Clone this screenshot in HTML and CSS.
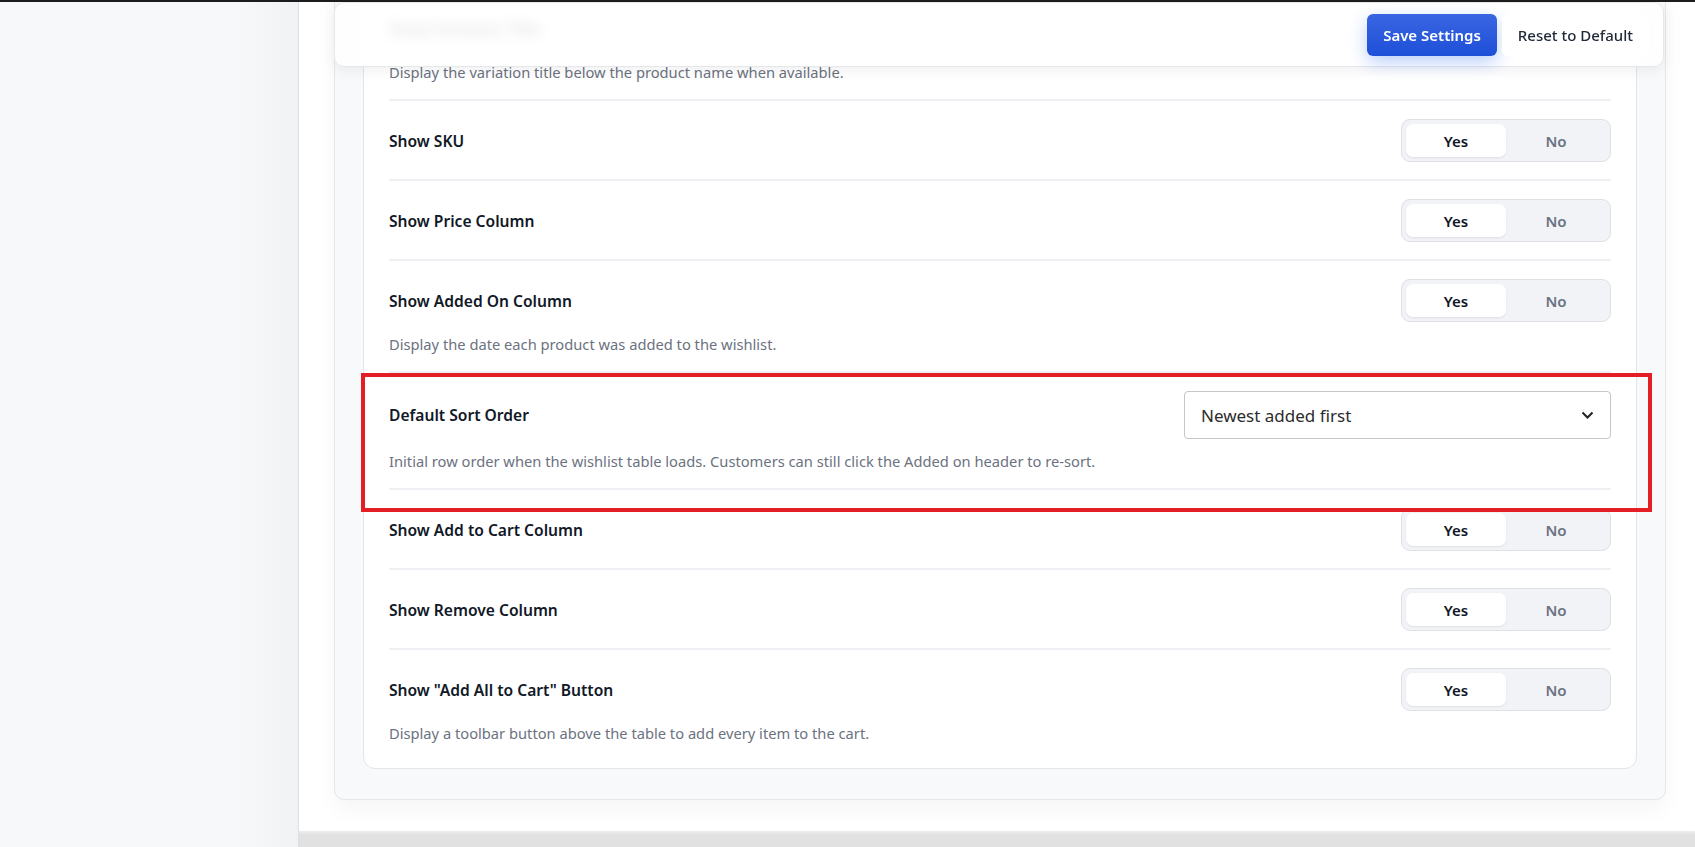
FILE: index.html
```html
<!DOCTYPE html>
<html lang="en">

<head>
    <meta charset="UTF-8" />
    <meta name="viewport" content="width=device-width, initial-scale=1.0" />
    <title>Wishlist Settings</title>
    <link rel="stylesheet" href="styles.css">
</head>

<body>
    <div class="topline"></div>
    <div class="layout">
        <aside class="sidebar"></aside>

        <main class="main">
            <div class="savebar">
                <button class="btn btn-save">Save Settings</button>
                <button class="btn btn-reset">Reset to Default</button>
            </div>

            <div class="panel">
                <div class="card">
                    <div class="setting-row">
                        <div class="setting-head">
                            <span class="setting-label">Show Variation Title</span>
                            <!-- hidden under the save bar -->
                            <div class="toggle behind-bar"><span class="opt active">Yes</span><span class="opt">No</span></div>
                        </div>
                        <p class="setting-desc">Display the variation title below the product name when available.</p>
                    </div>

                    <div class="setting-row">
                        <div class="setting-head">
                            <span class="setting-label">Show SKU</span>
                            <div class="toggle"><span class="opt active">Yes</span><span class="opt">No</span></div>
                        </div>
                    </div>

                    <div class="setting-row">
                        <div class="setting-head">
                            <span class="setting-label">Show Price Column</span>
                            <div class="toggle"><span class="opt active">Yes</span><span class="opt">No</span></div>
                        </div>
                    </div>

                    <div class="setting-row">
                        <div class="setting-head">
                            <span class="setting-label">Show Added On Column</span>
                            <div class="toggle"><span class="opt active">Yes</span><span class="opt">No</span></div>
                        </div>
                        <p class="setting-desc">Display the date each product was added to the wishlist.</p>
                    </div>

                    <div class="setting-row">
                        <div class="setting-head">
                            <span class="setting-label">Default Sort Order</span>
                            <div class="select">
                                <span>Newest added first</span>
                                <svg width="13" height="8" viewBox="0 0 13 8"><polyline points="1.5,1.5 6.5,6.5 11.5,1.5" fill="none" stroke="#222" stroke-width="2" /></svg>
                            </div>
                        </div>
                        <p class="setting-desc">Initial row order when the wishlist table loads. Customers can still click the Added on header to re-sort.</p>
                    </div>

                    <div class="setting-row">
                        <div class="setting-head">
                            <span class="setting-label">Show Add to Cart Column</span>
                            <div class="toggle"><span class="opt active">Yes</span><span class="opt">No</span></div>
                        </div>
                    </div>

                    <div class="setting-row">
                        <div class="setting-head">
                            <span class="setting-label">Show Remove Column</span>
                            <div class="toggle"><span class="opt active">Yes</span><span class="opt">No</span></div>
                        </div>
                    </div>

                    <div class="setting-row">
                        <div class="setting-head">
                            <span class="setting-label">Show "Add All to Cart" Button</span>
                            <div class="toggle"><span class="opt active">Yes</span><span class="opt">No</span></div>
                        </div>
                        <p class="setting-desc">Display a toolbar button above the table to add every item to the cart.</p>
                    </div>
                </div>
            </div>

            <div class="footer-band"></div>

            <!-- highlight around the sort order row -->
            <div class="highlight"></div>
        </main>
    </div>
</body>

</html>
```

FILE: styles.css
```css
* {
    box-sizing: border-box;
}

body {
    margin: 0;
    height: 847px;
    overflow: hidden;
    background: #fff;
    font-family: "Noto Sans", "Open Sans", sans-serif;
    color: #111827;
}

.topline {
    height: 2px;
    background: #1c1c1c;
}

.layout {
    display: flex;
    height: 845px;
}

.sidebar {
    width: 299px;
    flex-shrink: 0;
    background: linear-gradient(to right, #f7f8fa 80%, #f1f2f4);
    border-right: 1px solid #dcdfe4;
}

.main {
    flex: 1;
    position: relative;
    padding: 0 29px 0 35px;
    overflow: hidden;
}

/* sticky save bar */
.savebar {
    position: absolute;
    top: 0;
    left: 35px;
    right: 31px;
    height: 65px;
    z-index: 2;
    display: flex;
    align-items: center;
    justify-content: flex-end;
    gap: 5px;
    padding-right: 14px;
    background: rgba(255, 255, 255, 0.86);
    backdrop-filter: blur(7px);
    border: 1px solid #e5e7eb;
    border-radius: 10px;
    box-shadow: 0 4px 14px rgba(15, 23, 42, 0.06);
}

.btn {
    height: 42px;
    padding: 0 16px;
    border: 0;
    border-radius: 6px;
    font-family: inherit;
    font-size: 15px;
    font-weight: 600;
    cursor: pointer;
}

.btn-save {
    background: linear-gradient(#3966e2, #1e4fd8);
    color: #fff;
    box-shadow: 0 6px 18px rgba(37, 99, 235, 0.32);
}

.btn-reset {
    background: #fff;
    color: #1f2937;
    font-weight: 500;
}

.panel {
    margin-top: -51px;
    padding: 28px 28px 30px;
    background: #f8f9fb;
    border: 1px solid #e3e6ea;
    border-radius: 10px;
    box-shadow: 0 10px 22px rgba(15, 23, 42, 0.04);
}

.card {
    background: #fff;
    border: 1px solid #e2e5ea;
    border-radius: 12px;
    padding: 8px 25px;
}

.setting-row {
    padding: 18px 0 17px;
    border-bottom: 2px solid #eef0f3;
}

.setting-row:last-child {
    border-bottom: none;
}

.setting-head {
    display: flex;
    align-items: center;
    justify-content: space-between;
}

.setting-label {
    font-size: 15.6px;
    font-weight: 600;
    color: #111827;
}

.setting-desc {
    margin: 12px 0 0;
    font-size: 14.7px;
    line-height: 20px;
    color: #6b7280;
}

.toggle {
    display: flex;
    padding: 4px;
    background: #f1f3f6;
    border: 1px solid #dde0e5;
    border-radius: 9px;
}

.behind-bar {
    visibility: hidden;
}

.opt {
    width: 100px;
    height: 33px;
    display: flex;
    align-items: center;
    justify-content: center;
    font-size: 15px;
    font-weight: 600;
    color: #6b7280;
    border-radius: 7px;
}

.opt.active {
    background: #fff;
    color: #111827;
    box-shadow: 0 1px 2px rgba(0, 0, 0, 0.08);
}

.select {
    width: 427px;
    height: 48px;
    display: flex;
    align-items: center;
    justify-content: space-between;
    padding: 0 16px 0 16px;
    border: 1px solid #c4c6c9;
    border-radius: 4px;
    font-size: 17px;
    color: #2b2b2b;
}

.footer-band {
    height: 40px;
    margin: 31px -29px 0 -35px;
    background: linear-gradient(#ededed, #e1e1e1 4px);
}

.highlight {
    position: absolute;
    left: 62px;
    top: 371px;
    width: 1291px;
    height: 139px;
    border: 4px solid #e31e24;
    z-index: 1;
}
```
